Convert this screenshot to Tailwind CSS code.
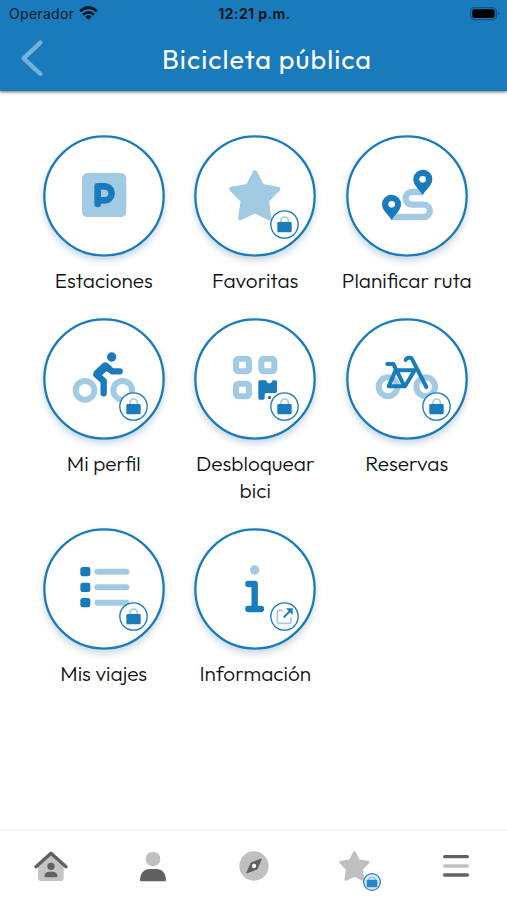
<!DOCTYPE html>
<html lang="es">
<head>
    <meta charset="UTF-8">
    <meta name="viewport" content="width=device-width, initial-scale=1.0">
    <title>Bicicleta pública</title>
    <script src="https://cdn.jsdelivr.net/npm/@tailwindcss/browser@4"></script>
</head>
<body class="bg-white h-[900px] flex flex-col overflow-hidden font-['Outfit','Inter','Open_Sans',sans-serif]">

    <!-- Shared symbols -->
    <svg class="hidden">
        <symbol id="lock" viewBox="0 0 87 87">
            <circle cx="43.500" cy="43.500" r="41" fill="#fff" stroke="#197bbb" stroke-width="4"/>
            <path d="M33 37V32a11 11 0 0 1 22 0v5" fill="none" stroke="#a3cae3" stroke-width="5"/>
            <rect x="22" y="36" width="43" height="31" rx="4" fill="#197bbb"/>
        </symbol>
        <symbol id="star" viewBox="0 0 156 152">
            <path d="M78 8L99 49L147 57L113 91L120 144L78 123L34 144L42 92L8 57L57 49Z" fill="currentColor" stroke="currentColor" stroke-width="14" stroke-linejoin="round"/>
        </symbol>
    </svg>

    <!-- Header -->
    <header class="relative z-10 h-[91px] shrink-0 bg-[#197bbb] shadow-[0_1px_3px_rgba(0,0,0,0.6)]">
        <div class="h-[27px] grid grid-cols-3 items-center pl-[9px] pr-[7px] text-[#071722] font-['Inter',sans-serif]">
            <div class="flex items-center gap-[5px] text-[14px] leading-none">
                <span class="w-[65px] tracking-[0.3px]">Operador</span>
                <svg class="w-[19px] h-[14px] -mt-[2px]" viewBox="0 0 57 42" fill="none" stroke="#071722" stroke-width="8">
                    <path d="M3 16Q28.500 -7 54 16"/>
                    <path d="M12 26Q28.500 12 45 26"/>
                    <path d="M28.500 41L19 32Q28.500 24 38 32Z" fill="#071722" stroke="none"/>
                </svg>
            </div>
            <div class="text-center text-[14px] font-bold leading-none whitespace-nowrap tracking-[0.4px]">12:21 p.m.</div>
            <svg class="w-[30px] h-[14px] justify-self-end mt-px" viewBox="0 0 90 42">
                <rect x="2" y="2" width="77" height="36" rx="11" fill="none" stroke="#0f5685" stroke-width="4"/>
                <rect x="7" y="7" width="67" height="26" rx="6" fill="#000"/>
                <path d="M83 14q8 6 0 12z" fill="#0f5685"/>
            </svg>
        </div>
        <div class="h-[64px] flex items-center">
            <svg class="w-[22px] h-[37px] ml-[21px] -mt-[1px]" viewBox="0 0 66 111" fill="none" stroke="#74b0d9" stroke-width="13" stroke-linecap="round" stroke-linejoin="round">
                <path d="M58 8L8 55L58 102"/>
            </svg>
            <h1 class="w-[222px] ml-[113px] text-center text-white text-[27px] leading-none tracking-[1.05px] whitespace-nowrap">Bicicleta pública</h1>
        </div>
    </header>

    <!-- Options -->
    <main class="flex-1 pt-[44px] pl-[28px]">
        <div class="w-[454.5px] grid grid-cols-3 gap-y-[24px] text-[20.8px] font-light leading-[27px] text-[#111] text-center">

            <div class="flex flex-col items-center gap-[10px]">
                <div class="relative size-[122px] rounded-full bg-white shadow-[0_4px_6px_rgba(25,80,130,0.22)]">
                    <svg class="size-[122px]" viewBox="37 30 366 366">
                        <circle cx="220" cy="213" r="179" fill="#fff" stroke="#197bbb" stroke-width="7"/>
                        <rect x="154" y="144" width="133" height="132" rx="16" fill="#a3cae3"/>
                        <path d="M201 237V184H222a21 21 0 0 1 0 42H201" fill="none" stroke="#197bbb" stroke-width="20" stroke-linecap="round" stroke-linejoin="round"/>
                    </svg>
                </div>
                <p class="whitespace-nowrap">Estaciones</p>
            </div>

            <div class="flex flex-col items-center gap-[10px]">
                <div class="relative size-[122px] rounded-full bg-white shadow-[0_4px_6px_rgba(25,80,130,0.22)]">
                    <svg class="size-[122px]" viewBox="36 30 366 366">
                        <circle cx="219" cy="213" r="179" fill="#fff" stroke="#197bbb" stroke-width="7"/>
                        <use href="#star" x="141" y="135" width="156" height="152" class="text-[#a3cae3]"/>
                    </svg>
                    <svg class="absolute left-[75.800px] top-[74.800px] size-[29px]"><use href="#lock"/></svg>
                </div>
                <p class="whitespace-nowrap">Favoritas</p>
            </div>

            <div class="flex flex-col items-center gap-[10px]">
                <div class="relative size-[122px] rounded-full bg-white shadow-[0_4px_6px_rgba(25,80,130,0.22)]">
                    <svg class="size-[122px]" viewBox="37 30 366 366">
                        <circle cx="220" cy="213" r="179" fill="#fff" stroke="#197bbb" stroke-width="7"/>
                        <path d="M267 201H235a15 15 0 0 0 0 38H270a18 18 0 0 1 0 37H174" fill="none" stroke="#a3cae3" stroke-width="19"/>
                        <path d="M267 210C257 194 239 181 239 163a28 28 0 0 1 57 0C296 181 277 194 267 210Z" fill="#197bbb"/>
                        <path d="M174 285C164 269 145 256 145 238a28 28 0 0 1 57 0C202 256 184 269 174 285Z" fill="#197bbb"/>
                        <circle cx="267" cy="163" r="10" fill="#fff"/>
                        <circle cx="174" cy="238" r="10" fill="#fff"/>
                    </svg>
                </div>
                <p class="whitespace-nowrap">Planificar ruta</p>
            </div>

            <div class="flex flex-col items-center gap-[10px]">
                <div class="relative size-[122px] rounded-full bg-white shadow-[0_4px_6px_rgba(25,80,130,0.22)]">
                    <svg class="size-[122px]" viewBox="37 24 366 366">
                        <circle cx="220" cy="207" r="179" fill="#fff" stroke="#197bbb" stroke-width="7"/>
                        <circle cx="163" cy="241" r="28" fill="none" stroke="#a3cae3" stroke-width="18"/>
                        <circle cx="276" cy="241" r="28" fill="none" stroke="#a3cae3" stroke-width="18"/>
                        <circle cx="243" cy="141" r="14" fill="#197bbb"/>
                        <path d="M219 250V213L197 194L224 169L245 184H267" fill="none" stroke="#197bbb" stroke-width="19" stroke-linecap="round" stroke-linejoin="round"/>
                        <path d="M188 186L216 160Q224 154 232 160L243 170L211 198L216 209Z" fill="#197bbb"/>
                    </svg>
                    <svg class="absolute left-[75.800px] top-[74.300px] size-[29px]"><use href="#lock"/></svg>
                </div>
                <p class="whitespace-nowrap">Mi perfil</p>
            </div>

            <div class="flex flex-col items-center gap-[10px]">
                <div class="relative size-[122px] rounded-full bg-white shadow-[0_4px_6px_rgba(25,80,130,0.22)]">
                    <svg class="size-[122px]" viewBox="36 24 366 366">
                        <circle cx="219" cy="207" r="179" fill="#fff" stroke="#197bbb" stroke-width="7"/>
                        <g fill="none" stroke="#a3cae3" stroke-width="18">
                            <rect x="162" y="146" width="39" height="38" rx="7"/>
                            <rect x="238" y="146" width="39" height="38" rx="7"/>
                            <rect x="162" y="221" width="39" height="38" rx="7"/>
                        </g>
                        <path d="M233 211H250Q254 211 255 216Q256 220 261 220H263Q268 220 269 216Q270 211 275 211H280Q285 211 285 216V244Q285 249 280 249H253Q248 249 248 254V264Q248 269 243 269H233Q229 269 229 264V216Q229 211 233 211Z" fill="#197bbb"/>
                        <rect x="258" y="258" width="9" height="9" rx="2" fill="#197bbb"/>
                        <rect x="276" y="258" width="9" height="9" rx="2" fill="#197bbb"/>
                    </svg>
                    <svg class="absolute left-[75.800px] top-[74.300px] size-[29px]"><use href="#lock"/></svg>
                </div>
                <p class="whitespace-nowrap">Desbloquear<br>bici</p>
            </div>

            <div class="flex flex-col items-center gap-[10px]">
                <div class="relative size-[122px] rounded-full bg-white shadow-[0_4px_6px_rgba(25,80,130,0.22)]">
                    <svg class="size-[122px]" viewBox="37 24 366 366">
                        <circle cx="220" cy="207" r="179" fill="#fff" stroke="#197bbb" stroke-width="7"/>
                        <circle cx="163" cy="230" r="28" fill="none" stroke="#a3cae3" stroke-width="18"/>
                        <circle cx="276" cy="230" r="28" fill="none" stroke="#a3cae3" stroke-width="18"/>
                        <g fill="none" stroke="#197bbb" stroke-width="12" stroke-linecap="round" stroke-linejoin="round">
                            <path d="M161 162H179L187 178L165 229H212L189 181H243L214 229"/>
                            <path d="M216 150Q218 143 226 143H229Q234 143 236 149L278 231"/>
                        </g>
                    </svg>
                    <svg class="absolute left-[75.800px] top-[74.300px] size-[29px]"><use href="#lock"/></svg>
                </div>
                <p class="whitespace-nowrap">Reservas</p>
            </div>

            <div class="flex flex-col items-center gap-[10px]">
                <div class="relative size-[122px] rounded-full bg-white shadow-[0_4px_6px_rgba(25,80,130,0.22)]">
                    <svg class="size-[122px]" viewBox="37 24 366 366">
                        <circle cx="220" cy="207" r="179" fill="#fff" stroke="#197bbb" stroke-width="7"/>
                        <g fill="#197bbb">
                            <rect x="149" y="141" width="30" height="28" rx="7"/>
                            <rect x="149" y="188" width="30" height="28" rx="7"/>
                            <rect x="149" y="234" width="30" height="28" rx="7"/>
                        </g>
                        <g fill="#a3cae3">
                            <rect x="191" y="146" width="105" height="18" rx="9"/>
                            <rect x="191" y="193" width="105" height="18" rx="9"/>
                            <rect x="191" y="239" width="105" height="18" rx="9"/>
                        </g>
                    </svg>
                    <svg class="absolute left-[75.800px] top-[74.300px] size-[29px]"><use href="#lock"/></svg>
                </div>
                <p class="whitespace-nowrap">Mis viajes</p>
            </div>

            <div class="flex flex-col items-center gap-[10px]">
                <div class="relative size-[122px] rounded-full bg-white shadow-[0_4px_6px_rgba(25,80,130,0.22)]">
                    <svg class="size-[122px]" viewBox="36 24 366 366">
                        <circle cx="219" cy="207" r="179" fill="#fff" stroke="#197bbb" stroke-width="7"/>
                        <circle cx="218" cy="150" r="14" fill="#a3cae3"/>
                        <path d="M199 192H218V267M199 267H237" fill="none" stroke="#197bbb" stroke-width="19" stroke-linecap="round" stroke-linejoin="round"/>
                    </svg>
                    <svg class="absolute left-[75.800px] top-[74.300px] size-[29px]" viewBox="0 0 87 87">
                        <circle cx="43.500" cy="43.500" r="41" fill="#fff" stroke="#197bbb" stroke-width="4"/>
                        <path d="M38 25H25Q22 25 22 28V61Q22 64 25 64H60Q63 64 63 61V45" fill="none" stroke="#a3cae3" stroke-width="5"/>
                        <path d="M41 46L59 28" fill="none" stroke="#197bbb" stroke-width="6"/>
                        <path d="M48 19H68V39Z" fill="#197bbb"/>
                    </svg>
                </div>
                <p class="whitespace-nowrap">Información</p>
            </div>
        </div>
    </main>

    <!-- Bottom navigation -->
    <nav class="h-[71px] shrink-0 border-t-2 border-[#f5f5f5] grid grid-cols-5 justify-items-center pt-[20px]">
        <svg class="w-[34px] h-[31px]" viewBox="0 0 102 93">
            <path d="M12 40L51 10L89 40V80Q89 90 79 90H23Q12 90 12 80Z" fill="#c4c4c4"/>
            <path d="M6 47L51 7L96 47" fill="none" stroke="#616161" stroke-width="10" stroke-linecap="round" stroke-linejoin="round"/>
            <circle cx="51" cy="46" r="11" fill="#616161"/>
            <path d="M32 79V73Q34 62 46 62H56Q68 62 70 73V79Z" fill="#616161"/>
        </svg>
        <svg class="w-[26px] h-[31px] ml-px" viewBox="0 0 78 93">
            <circle cx="39" cy="24" r="22" fill="#c0c0c0"/>
            <path d="M4 91Q0 91 0 87C1 65 13 54 29 54H49C65 54 77 65 78 87Q78 91 74 91Z" fill="#616161"/>
        </svg>
        <svg class="size-[30px] ml-px" viewBox="0 0 90 90">
            <circle cx="45" cy="45" r="44" fill="#c0c0c0"/>
            <path d="M67 24L54 54L23 66L36 36Z" fill="#616161" stroke="#616161" stroke-width="3" stroke-linejoin="round"/>
            <circle cx="45" cy="45" r="6.500" fill="#fff"/>
        </svg>
        <div class="relative w-[31px] h-[30px]">
            <svg class="w-[31px] h-[30px] text-[#c0c0c0]"><use href="#star"/></svg>
            <svg class="absolute left-[24px] top-[22px] size-[18px]" viewBox="0 0 54 54">
                <circle cx="27" cy="27" r="25" fill="#d9ebf7" stroke="#2b85c2" stroke-width="4"/>
                <path d="M18 21V17Q18 13 27 13Q36 13 36 17V21" fill="none" stroke="#8fc0e0" stroke-width="4"/>
                <rect x="11" y="20" width="32" height="23" rx="4" fill="#2b85c2"/>
            </svg>
        </div>
        <svg class="w-[26px] h-[30px]" viewBox="0 0 78 90" fill="none" stroke-width="10" stroke-linecap="round">
            <path d="M5 17H73" stroke="#616161"/>
            <path d="M5 45H73" stroke="#c0c0c0"/>
            <path d="M5 72H73" stroke="#616161"/>
        </svg>
    </nav>
</body>
</html>
